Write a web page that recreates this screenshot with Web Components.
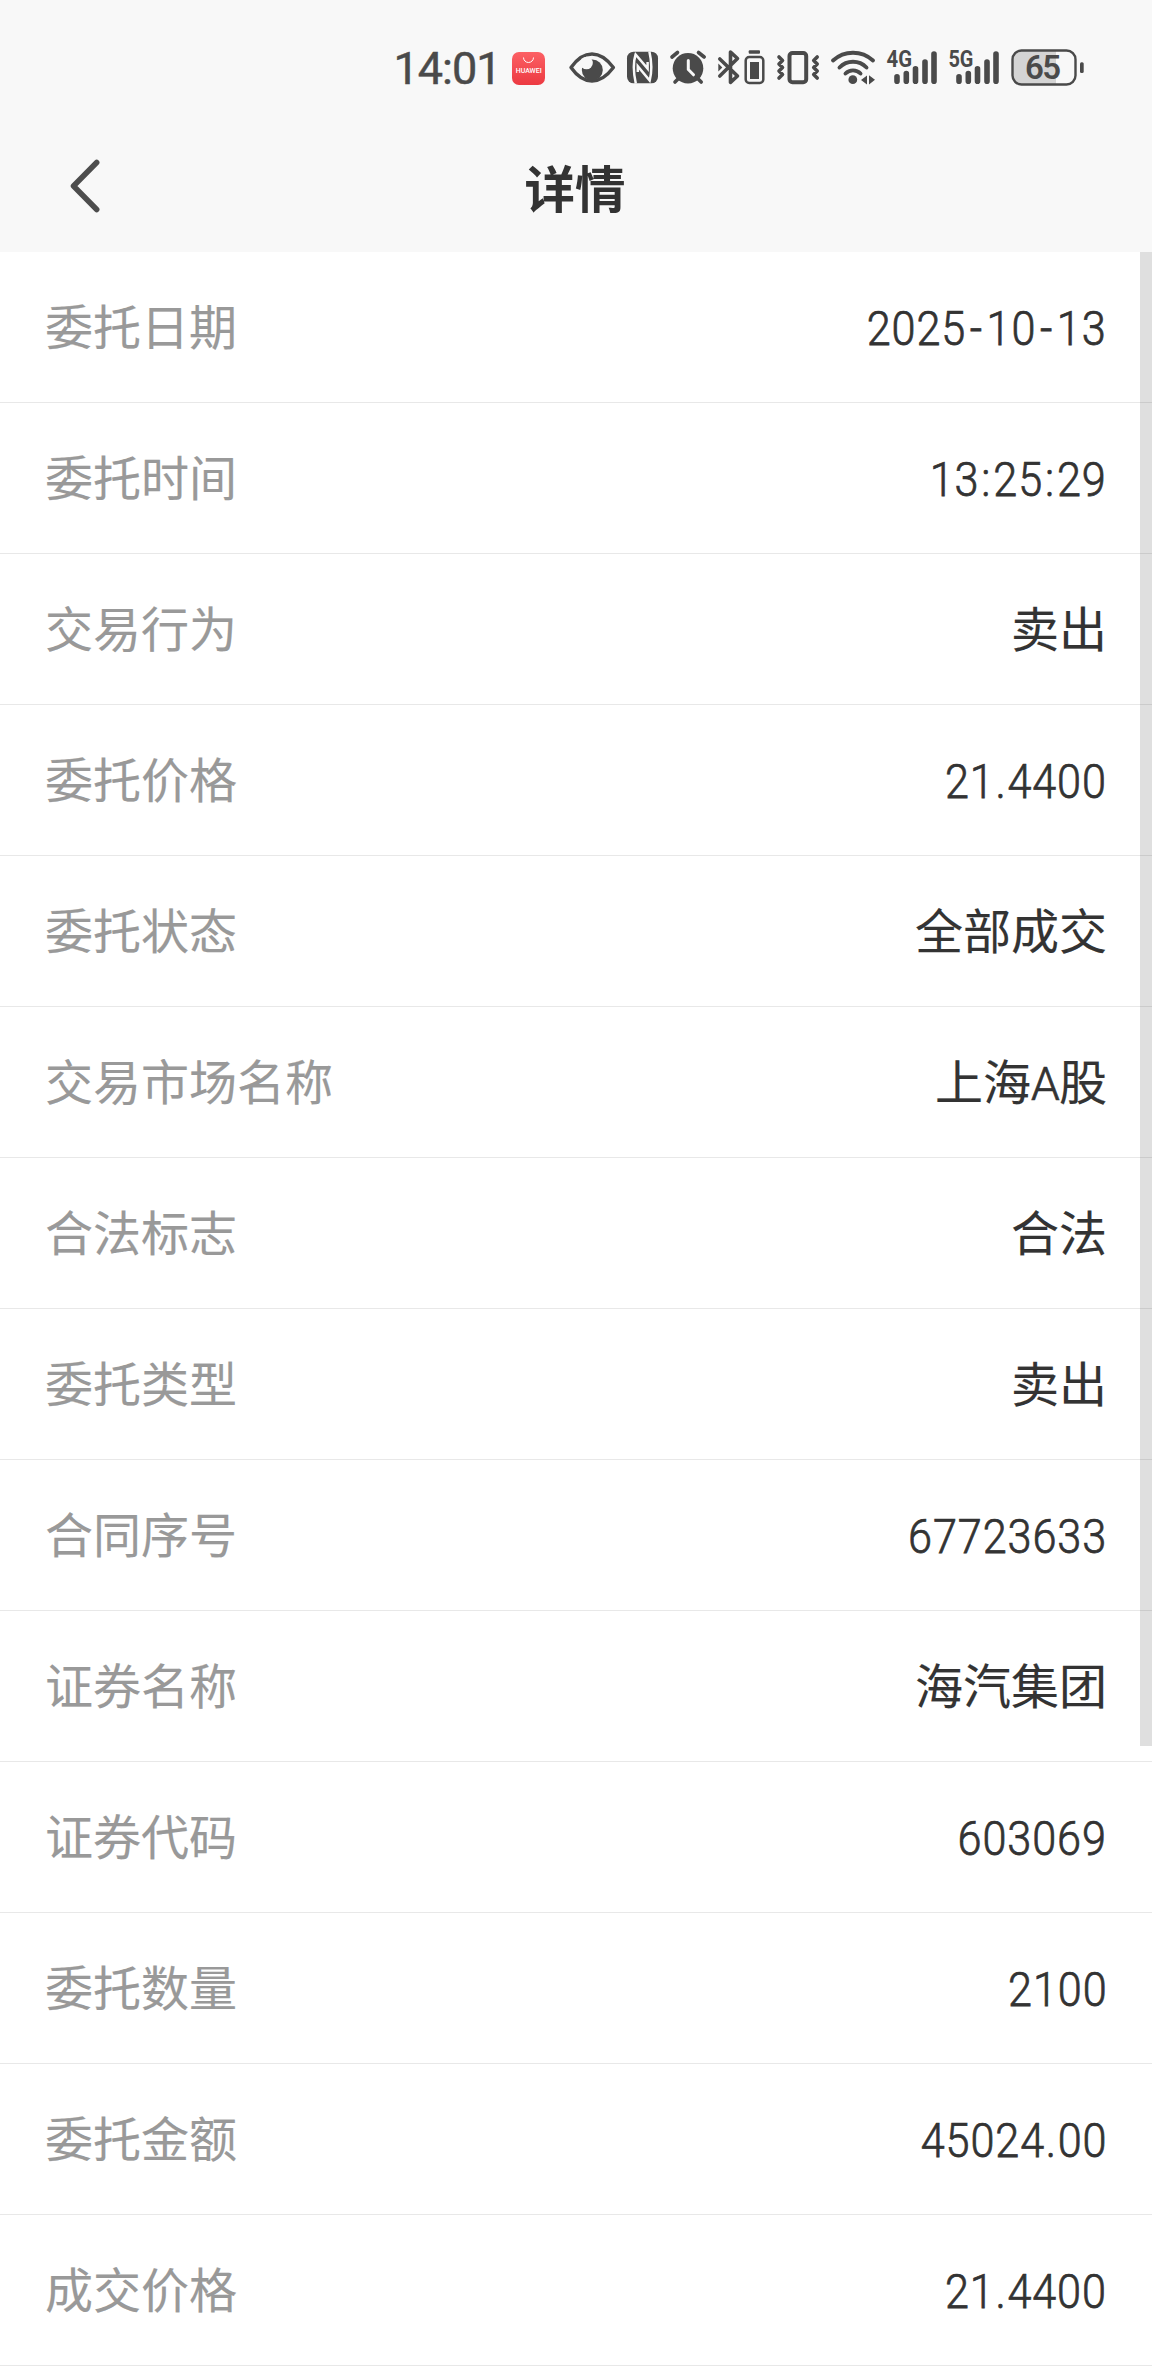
<!DOCTYPE html>
<html lang="zh-CN">
<head>
<meta charset="UTF-8">
<meta name="viewport" content="width=device-width, initial-scale=1">
<title>详情</title>
<style>
  body {
    margin: 0;
    background: #fff;
    color: #333;
    font-family: Roboto, "Noto Sans CJK SC", sans-serif;
  }
</style>
</head>
<body>
<detail-page>
  <status-bar slot="top"></status-bar>
  <nav-bar slot="top">详情</nav-bar>
  <detail-list></detail-list>
</detail-page>

<script>
const orden = [
  ["委托日期", "2025-10-13"],
  ["委托时间", "13:25:29"],
  ["交易行为", "卖出"],
  ["委托价格", "21.4400"],
  ["委托状态", "全部成交"],
  ["交易市场名称", "上海A股"],
  ["合法标志", "合法"],
  ["委托类型", "卖出"],
  ["合同序号", "67723633"],
  ["证券名称", "海汽集团"],
  ["证券代码", "603069"],
  ["委托数量", "2100"],
  ["委托金额", "45024.00"],
  ["成交价格", "21.4400"],
];

// Each icon covers one slice of the bar: [left edge, width, markup]
const icons = [
  [390, 115, `<text x="393.5" y="84" font-size="45" stroke="#4a4a4a" stroke-width="0.5" textLength="108">14:01</text>`],
  [505, 50, `
    <rect x="512" y="52" width="33" height="33" rx="7" fill="url(#red)"/>
    <path d="M523.5 57.5a5 5 0 0 0 10 0" fill="none" stroke="#fff" stroke-width="1"/>
    <text x="515.7" y="73.3" font-size="7" font-weight="500" fill="#fff" textLength="26">HUAWEI</text>
    <defs><linearGradient id="red" x2="0" y2="1"><stop stop-color="#fc6064"/><stop offset="1" stop-color="#ec3a42"/></linearGradient></defs>`],
  [555, 65, `
    <path class="line" stroke-width="3.4" d="M571 67.5C577 59 584 54 592 54s15 5 21.4 13.5C607 76 600 81 592 81s-15-5-21-13.5Z"/>
    <circle cx="592.3" cy="70" r="10.5"/>
    <circle cx="586.5" cy="63" r="6.3" fill="#f8f8f8"/>`],
  [620, 45, `
    <rect x="627" y="51.7" width="31" height="31.6" rx="6.5"/>
    <path d="M635.8 83.5C633.5 73 633.5 61 635.6 54.5L647.6 68.5V62M649.4 51.5C651.8 62 651.6 73 649.7 80.5L637.8 66.3V72" fill="none" stroke="#f8f8f8" stroke-width="2.5"/>`],
  [665, 48, `
    <circle cx="688" cy="68.3" r="15.3"/>
    <path class="line" stroke-width="3.6" d="M672 57l5.5-4.5M698.5 52.5l5.7 4.5M675 82l4-4M701.2 82l-4-4"/>
    <path d="M688.3 60.5v9l5.2 5.3" fill="none" stroke="#f8f8f8" stroke-width="3" stroke-linecap="round"/>`],
  [713, 58, `
    <path class="line" stroke-width="3.6" d="M719.8 59L737.5 76L730.5 82.3V52L737.5 58.5L719.8 76"/>
    <path d="M718.3 63.5v8l4-4z"/>
    <rect class="line" x="745.7" y="57" width="17.6" height="26" rx="3.5" stroke-width="2.5"/>
    <rect x="748.7" y="50.3" width="11.3" height="3.4" rx="1"/>
    <rect x="750" y="62" width="9" height="17"/>`],
  [771, 54, `
    <rect class="line" x="789.5" y="53" width="16.7" height="29.3" rx="3" stroke-width="4"/>
    <path class="line" stroke-width="3.6" d="M779 57l3.5 3.5-3.5 3.5 3.5 3.5-3.5 3.5 3.5 3.5-3.5 3.5M817.2 57l-3.5 3.5 3.5 3.5-3.5 3.5 3.5 3.5-3.5 3.5 3.5 3.5"/>`],
  [825, 56, `
    <path class="line" stroke-width="3.9" d="M833 60.5a29.5 29.5 0 0 1 40 0M839.5 67.5a18.8 18.8 0 0 1 27 0M845.5 73.5a10.5 10.5 0 0 1 15 0"/>
    <circle cx="852.8" cy="79.7" r="4.4"/>
    <path d="M861 80l6-4.5v9zM869 75.2l6 4.6-6 4.6z"/>`],
  [881, 63, `
    <text x="886.6" y="67.3" font-size="23" font-weight="700" textLength="25.5" lengthAdjust="spacingAndGlyphs">4G</text>
    <path class="line" stroke-width="5.6" d="M897 76.8v4.5M906.3 73.5v7.8M915.5 68.8v12.5M925 62v19.3M934 54v27.3"/>`],
  [944, 61, `
    <text x="948.4" y="67.3" font-size="23" font-weight="700" textLength="25" lengthAdjust="spacingAndGlyphs">5G</text>
    <path class="line" stroke-width="5.6" d="M959 76.8v4.5M968.3 73.5v7.8M977.5 68.8v12.5M987 62v19.3M996 54v27.3"/>`],
  [1005, 85, `
    <path d="M1056 51h-34q-9 0-9 9v15q0 9 9 9h34z" fill="#d4d4d4"/>
    <rect class="line" x="1012.5" y="50.5" width="63" height="34" rx="9" stroke-width="2.4"/>
    <rect x="1080" y="62.3" width="3.7" height="10.7" rx="1.5"/>
    <text x="1025" y="79.3" font-size="33" font-weight="600" textLength="36">65</text>`],
];

class DetailPage extends HTMLElement {
  constructor() {
    super();
    this.attachShadow({ mode: "open" }).innerHTML = /* html */`
      <style>
        :host {
          display: flex;
          flex-direction: column;
          height: 2376px;
          overflow: hidden;
        }
        header {
          flex: 0 0 252px;
          background: #f8f8f8;
        }
        main { position: relative; }
        /* Overlay scrollbar, it lies over the row dividers */
        .thumb {
          position: absolute;
          top: 0;
          right: 0;
          width: 12px;
          height: 1494px;
          background: rgba(0, 0, 0, 0.125);
        }
      </style>
      <header><slot name="top"></slot></header>
      <main>
        <slot></slot>
        <div class="thumb"></div>
      </main>
    `;
  }
}

class StatusBar extends HTMLElement {
  constructor() {
    super();
    this.attachShadow({ mode: "open" });
  }

  connectedCallback() {
    this.shadowRoot.innerHTML = /* html */`
      <style>
        :host {
          display: flex;
          height: 130px;
          padding-left: 390px;
          box-sizing: border-box;
        }
        svg {
          display: block;
          flex: none;
          height: 130px;
          fill: #4a4a4a;
        }
        .line {
          fill: none;
          stroke: #4a4a4a;
          stroke-linecap: round;
          stroke-linejoin: round;
        }
      </style>
      ${icons.map(([x, w, markup]) => `<svg width="${w}" viewBox="${x} 0 ${w} 130">${markup}</svg>`).join("")}
    `;
  }
}

class NavBar extends HTMLElement {
  constructor() {
    super();
    this.attachShadow({ mode: "open" }).innerHTML = /* html */`
      <style>
        :host {
          display: grid;
          grid-template-columns: 120px 1fr 122px;
          align-items: center;
          height: 122px;
        }
        svg {
          display: block;
          margin: -10px 0 0 65px;
        }
        h1 {
          margin: -1px 0 0;
          text-align: center;
          font-size: 50.5px;
          font-weight: 700;
          line-height: 70px;
        }
      </style>
      <svg width="40" height="60" viewBox="65 156 40 60">
        <path d="M96.7 162.5L73.5 186l23.2 23.5" fill="none" stroke="#4d4d4d" stroke-width="5.5" stroke-linecap="round" stroke-linejoin="round"/>
      </svg>
      <h1><slot></slot></h1>
    `;
  }
}

class DetailRow extends HTMLElement {
  constructor() {
    super();
    this.attachShadow({ mode: "open" });
  }

  connectedCallback() {
    this.render();
  }

  get #valor() {
    const valor = this.getAttribute("value") ?? "";
    // separators get a little more air than the digits
    return valor
      .replace(/-/g, `<i class="dash">-</i>`)
      .replace(/:/g, `<i class="colon">:</i>`)
      .replace(/\./g, `<i class="dot">.</i>`)
      .replace(/A/g, `<i class="latin">A</i>`);
  }

  render() {
    const numeric = /^[\d.:-]+$/.test(this.getAttribute("value"));
    this.shadowRoot.innerHTML = /* html */`
      <style>
        :host {
          display: flex;
          justify-content: space-between;
          align-items: center;
          box-sizing: border-box;
          height: 151px;
          padding: 3px 45px 0;
          border-bottom: 1px solid #e8e8e8;
          font-size: 48px;
          line-height: 70px;
        }
        .label { color: #999; }
        .label, .value { -webkit-text-stroke: 0.15px currentColor; }
        .value.num {
          transform: scaleX(0.9);
          transform-origin: right;
          letter-spacing: 1px;
          font-weight: 300;
          -webkit-text-stroke: 0.75px currentColor;
        }
        i { font-style: normal; }
        .dash { margin: 0 4px; }
        .colon { margin: 0 2.2px; }
        .dot { margin: 0 0.8px; }
        .latin {
          font-size: 46px;
          font-weight: 300;
          letter-spacing: -0.8px;
          -webkit-text-stroke: 0.7px currentColor;
        }
      </style>
      <span class="label"><slot></slot></span>
      <span class="value ${numeric ? "num" : ""}">${this.#valor}</span>
    `;
  }
}

class DetailList extends HTMLElement {
  constructor() {
    super();
    this.attachShadow({ mode: "open" });
  }

  connectedCallback() {
    this.shadowRoot.innerHTML = /* html */`
      <style>
        :host { display: flex; flex-direction: column; }
      </style>
      ${orden.map(([label, value]) => `<detail-row value="${value}">${label}</detail-row>`).join("")}
    `;
  }
}

customElements.define("detail-page", DetailPage);
customElements.define("status-bar", StatusBar);
customElements.define("nav-bar", NavBar);
customElements.define("detail-row", DetailRow);
customElements.define("detail-list", DetailList);
</script>
</body>
</html>
